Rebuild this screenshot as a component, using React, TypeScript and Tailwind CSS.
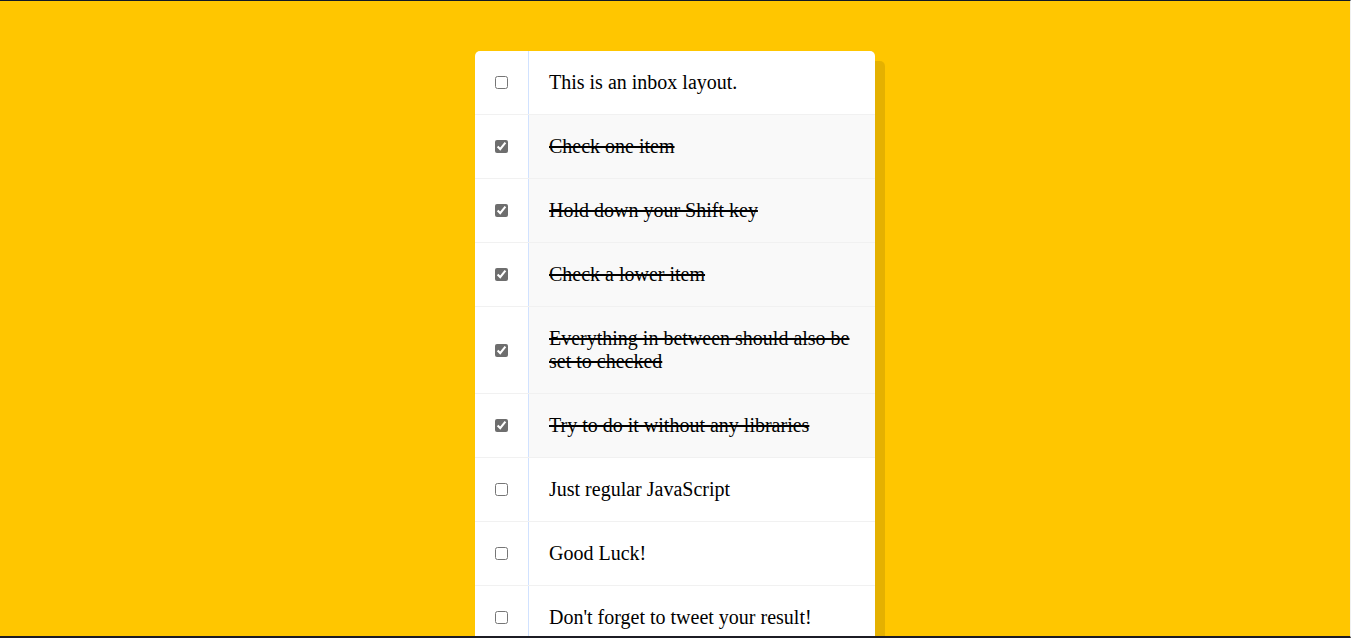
import { useState } from 'react';

const ITEMS = [
  { text: 'This is an inbox layout.', checked: false },
  { text: 'Check one item', checked: true },
  { text: 'Hold down your Shift key', checked: true },
  { text: 'Check a lower item', checked: true },
  { text: 'Everything in between should also be set to checked', checked: true },
  { text: 'Try to do it without any libraries', checked: true },
  { text: 'Just regular JavaScript', checked: false },
  { text: 'Good Luck!', checked: false },
  { text: "Don't forget to tweet your result!", checked: false },
];

export default function App() {
  const [checked, setChecked] = useState<boolean[]>(ITEMS.map((i) => i.checked));
  const [lastChecked, setLastChecked] = useState<number | null>(null);

  const handleClick = (index: number, shiftKey: boolean) => {
    setChecked((prev) => {
      const next = [...prev];
      const value = !prev[index];
      next[index] = value;
      // shift-click fills everything between the last box and this one
      if (shiftKey && value && lastChecked !== null) {
        const [from, to] = [Math.min(lastChecked, index), Math.max(lastChecked, index)];
        for (let i = from; i <= to; i++) next[i] = true;
      }
      return next;
    });
    setLastChecked(index);
  };

  return (
    <div className="h-[638px] overflow-hidden bg-[#ffc600] border-t border-t-[#111827] border-b-2 border-b-[#1c1c24] border-r border-r-[#f0f0f0]">
      <div className="w-[400px] mx-auto mt-[50px] bg-white rounded-[5px] shadow-[10px_10px_0_rgba(0,0,0,0.1)]">
        {ITEMS.map((item, index) => (
          <div
            key={item.text}
            className={`flex items-center ${index < ITEMS.length - 1 ? 'border-b border-[#f1f1f1]' : ''}`}
          >
            <input
              type="checkbox"
              className="m-5 w-[13px] h-[13px] accent-[#6e6e6e]"
              checked={checked[index]}
              onChange={() => {}}
              onClick={(e) => handleClick(index, e.shiftKey)}
            />
            <p
              className={`flex-1 m-0 p-5 text-[20px] leading-[23px] text-black font-['Liberation_Serif',serif] border-l border-[#d1e2ff] ${
                checked[index] ? 'bg-[#f9f9f9] line-through' : ''
              }`}
            >
              {item.text}
            </p>
          </div>
        ))}
      </div>
    </div>
  );
}
